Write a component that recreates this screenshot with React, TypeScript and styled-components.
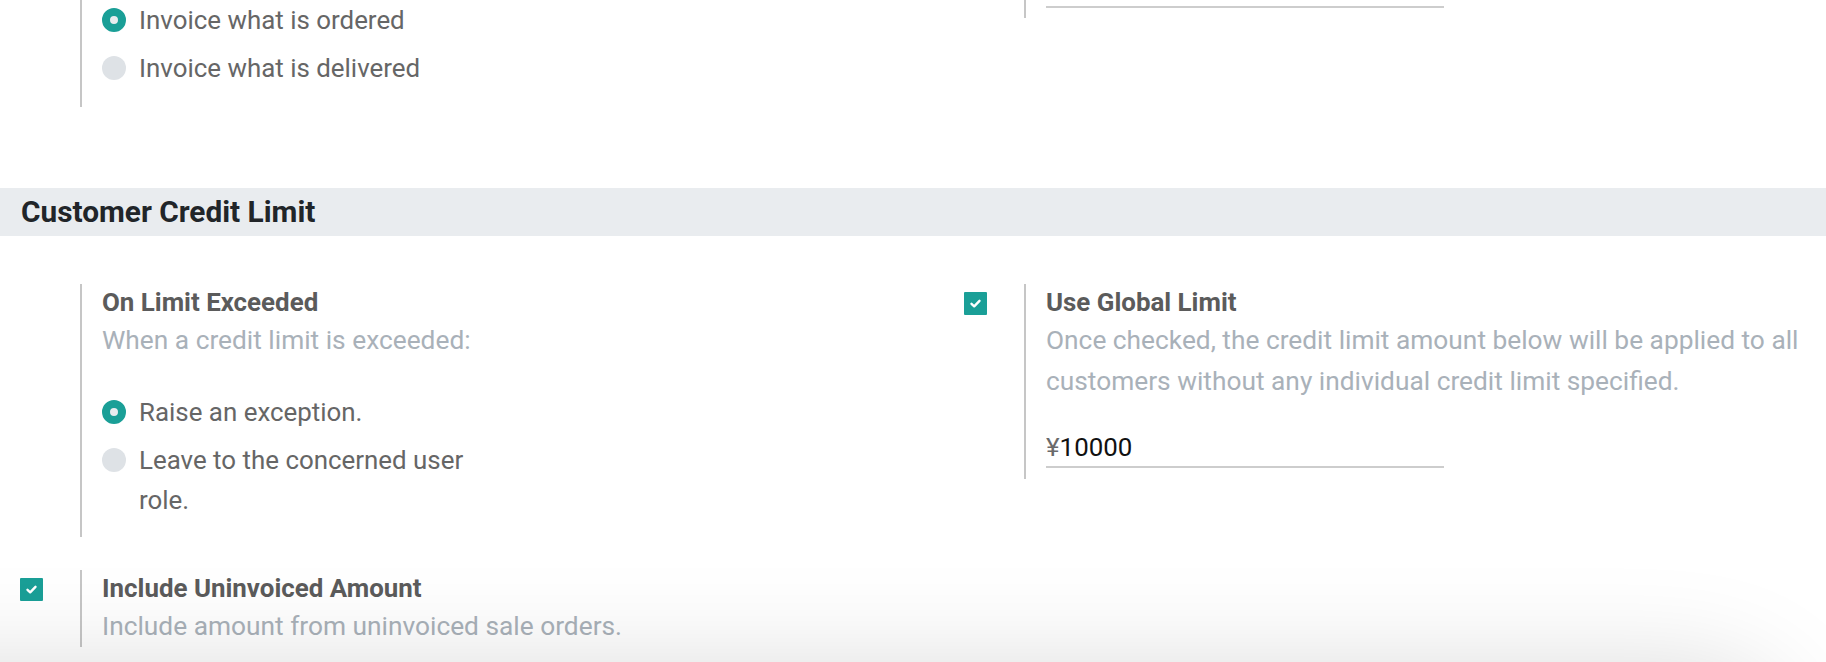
import React from "react";
import styled, { createGlobalStyle } from "styled-components";

const GlobalStyle = createGlobalStyle`
  html, body { margin: 0; padding: 0; background: #ffffff; }
  body { font-family: Roboto, "Liberation Sans", sans-serif; overflow: hidden; }
`;

const TEAL = "#1a9f97";

const Page = styled.div`
  position: relative;
  width: 1826px;
  height: 662px;
  overflow: hidden;
  background: #ffffff;
  font-size: 25.9px;
  color: #666666;
`;

const SettingsGrid = styled.div<{ $mt?: number }>`
  display: grid;
  grid-template-columns: 944px 1fr;
  align-items: start;
  row-gap: 33px;
  margin-top: ${(p) => p.$mt ?? 0}px;
`;

const SettingBox = styled.div`
  display: flex;
  align-items: stretch;
`;

const LeftPane = styled.div`
  width: 80px;
  flex: none;
  box-sizing: border-box;
  padding: 8px 0 0 20px;
`;

const RightPane = styled.div<{ $pb?: number }>`
  flex: 1;
  min-width: 0;
  border-left: 2px solid #c6c6c6;
  padding: 0 0 ${(p) => p.$pb ?? 0}px 20px;
`;

const SettingTitle = styled.div`
  font-weight: 700;
  line-height: 36px;
  color: #5b5b5b;
`;

const SettingDesc = styled.div`
  font-size: 26.3px;
  line-height: 41px;
  color: #a9b1b9;
`;

const RadioGroup = styled.div<{ $mt?: number }>`
  display: flex;
  flex-direction: column;
  gap: 8px;
  margin-top: ${(p) => p.$mt ?? 0}px;
`;

const RadioItem = styled.div`
  display: flex;
  align-items: flex-start;
  gap: 13px;
  line-height: 40px;
`;

const RadioDot = styled.span<{ $checked?: boolean }>`
  flex: none;
  width: 24px;
  height: 24px;
  margin-top: 8px;
  box-sizing: border-box;
  border-radius: 50%;
  background: ${(p) => (p.$checked ? "#e9ecef" : "#dee2e6")};
  border: ${(p) => (p.$checked ? `8px solid ${TEAL}` : "none")};
`;

const RadioLabel = styled.span`
  max-width: 350px;
  color: #666666;
`;

const CheckBox = styled.span`
  display: flex;
  align-items: center;
  justify-content: center;
  width: 23px;
  height: 23px;
  background: ${TEAL};
  border-radius: 1px;
`;

const AmountField = styled.div<{ $mt?: number; $h?: number }>`
  width: 398px;
  box-sizing: content-box;
  height: ${(p) => p.$h ?? 37}px;
  margin-top: ${(p) => p.$mt ?? 0}px;
  line-height: 37px;
  border-bottom: 2px solid #cdcdcd;
  overflow: hidden;
  color: #111111;
`;

const Currency = styled.span`
  color: #6a6a6a;
`;

const SectionHeader = styled.h2`
  margin: 81px 0 0 0;
  height: 48px;
  line-height: 48px;
  padding-left: 21px;
  background: #e9ecef;
  font-size: 29.8px;
  font-weight: 700;
  color: #212529;
`;

const Shade = styled.div`
  position: absolute;
  left: -300px;
  right: 40px;
  top: 674px;
  height: 300px;
  border-radius: 90px;
  background: #ffffff;
  box-shadow: 0 0 110px rgba(0, 0, 0, 0.17);
  pointer-events: none;
`;

const Check = () => (
  <svg width="13" height="11" viewBox="0 0 13 11">
    <path d="M2.5 5.8 L5.2 8.3 L10.5 2.8" fill="none" stroke="#ffffff" strokeWidth="2.4" strokeLinecap="round" strokeLinejoin="round" />
  </svg>
);

export default function App() {
  return (
    <Page>
      <GlobalStyle />
      <SettingsGrid>
        <SettingBox>
          <LeftPane />
          <RightPane $pb={19}>
            <RadioGroup>
              <RadioItem>
                <RadioDot $checked />
                <RadioLabel>Invoice what is ordered</RadioLabel>
              </RadioItem>
              <RadioItem>
                <RadioDot />
                <RadioLabel>Invoice what is delivered</RadioLabel>
              </RadioItem>
            </RadioGroup>
          </RightPane>
        </SettingBox>
        <SettingBox>
          <LeftPane />
          <RightPane $pb={10}>
            <AmountField $h={6} />
          </RightPane>
        </SettingBox>
      </SettingsGrid>

      <SectionHeader>Customer Credit Limit</SectionHeader>

      <SettingsGrid $mt={48}>
        <SettingBox>
          <LeftPane />
          <RightPane $pb={17}>
            <SettingTitle>On Limit Exceeded</SettingTitle>
            <SettingDesc>When a credit limit is exceeded:</SettingDesc>
            <RadioGroup $mt={31}>
              <RadioItem>
                <RadioDot $checked />
                <RadioLabel>Raise an exception.</RadioLabel>
              </RadioItem>
              <RadioItem>
                <RadioDot />
                <RadioLabel>Leave to the concerned user role.</RadioLabel>
              </RadioItem>
            </RadioGroup>
          </RightPane>
        </SettingBox>
        <SettingBox>
          <LeftPane>
            <CheckBox>
              <Check />
            </CheckBox>
          </LeftPane>
          <RightPane $pb={11}>
            <SettingTitle>Use Global Limit</SettingTitle>
            <SettingDesc>
              Once checked, the credit limit amount below will be applied to all customers without any individual credit limit specified.
            </SettingDesc>
            <AmountField $mt={27}>
              <Currency>¥</Currency>10000
            </AmountField>
          </RightPane>
        </SettingBox>
        <SettingBox>
          <LeftPane>
            <CheckBox>
              <Check />
            </CheckBox>
          </LeftPane>
          <RightPane>
            <SettingTitle>Include Uninvoiced Amount</SettingTitle>
            <SettingDesc>Include amount from uninvoiced sale orders.</SettingDesc>
          </RightPane>
        </SettingBox>
      </SettingsGrid>
      <Shade />
    </Page>
  );
}
